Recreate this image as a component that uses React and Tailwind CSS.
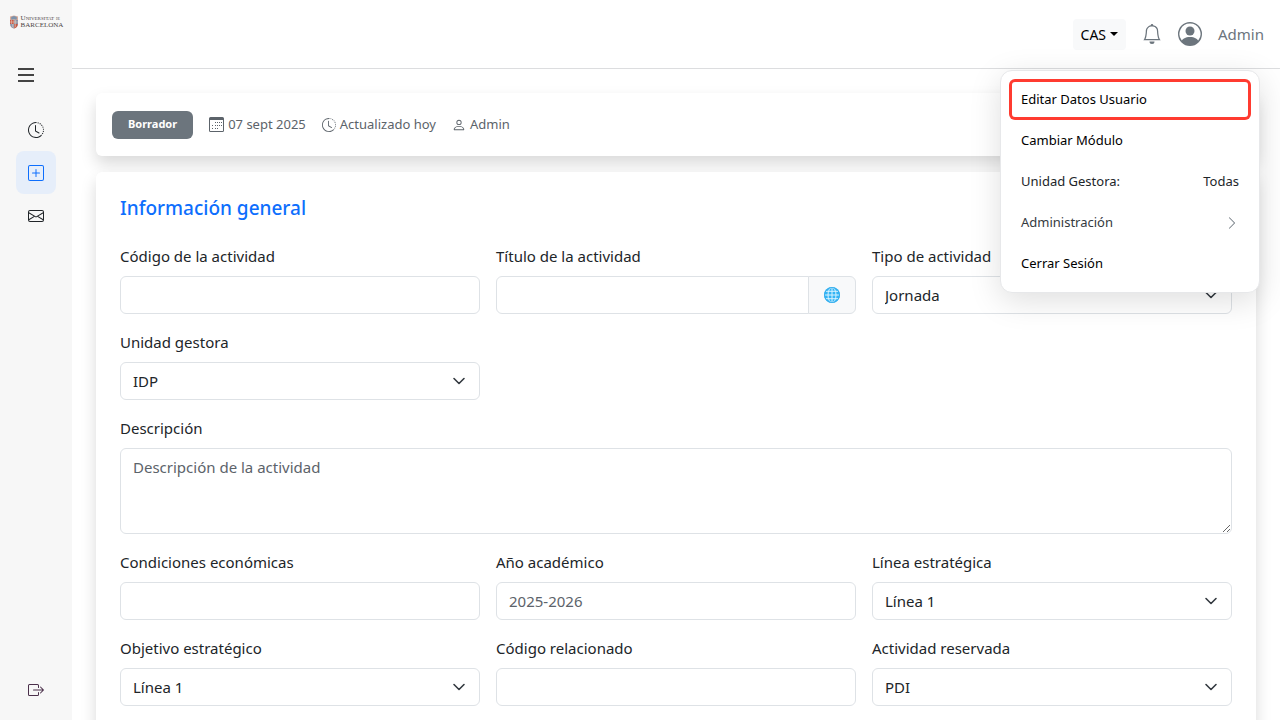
import React from "react";
import {
  BsBell,
  BsBoxArrowRight,
  BsChevronRight,
  BsClockHistory,
  BsEnvelope,
  BsPerson,
  BsPersonCircle,
  BsPlusSquare,
} from "react-icons/bs";

const control =
  "block h-[38px] w-full rounded-md border border-[#dee2e6] bg-white px-3 text-[15px] text-[#212529] placeholder:text-[#5c636a]";

function Field({ id, label, children, className = "" }) {
  return (
    <div className={className}>
      <label htmlFor={id} className="mb-2 block text-[15px] leading-6">
        {label}
      </label>
      {children}
    </div>
  );
}

function TextField({ id, label, placeholder }) {
  return (
    <Field id={id} label={label}>
      <input id={id} type="text" placeholder={placeholder} className={control} />
    </Field>
  );
}

function SelectField({ id, label, options }) {
  return (
    <Field id={id} label={label}>
      <div className="relative">
        <select id={id} className={control + " appearance-none pr-9"}>
          {options.map((option) => (
            <option key={option}>{option}</option>
          ))}
        </select>
        <svg
          viewBox="0 0 16 16"
          className="pointer-events-none absolute top-1/2 right-[13px] h-4 w-4 -translate-y-1/2"
          fill="none"
          stroke="#343a40"
          strokeWidth="1.6"
          strokeLinecap="round"
          strokeLinejoin="round"
          aria-hidden="true"
        >
          <path d="m3 5.500 5 5 5-5" />
        </svg>
      </div>
    </Field>
  );
}

function Logo() {
  return (
    <a href="#inicio" aria-label="Universitat de Barcelona" className="flex items-center justify-center gap-0.5 pt-[15px]">
      <svg viewBox="0 0 10 14" className="h-[14px] w-[10px] shrink-0" aria-hidden="true">
        <path d="M1 1.5 5 .5l4 1V9c0 2.500-1.500 4-4 4.600C2.500 13 1 11.500 1 9Z" fill="#d9aa98" />
        <path d="M2.200 2 5 1l2.800 1v2.500H2.200Z" fill="#7c93ad" />
        <path d="M1 5h4v4H1Z" fill="#c55b4c" />
        <path d="M5 5h4v4H5Z" fill="#8a91a8" />
        <path d="M1.200 9H5v4.500C2.800 12.800 1.500 11.500 1.200 9Z" fill="#8396b4" />
        <path d="M5 9h3.800c-.3 2.500-1.600 3.800-3.800 4.500Z" fill="#bd5548" />
        <path d="M2.500 5v4M6.500 5v7M3.500 9v3M1 7h8M5 4v9" stroke="#ecd3b8" strokeWidth=".5" />
      </svg>
      <span className="flex flex-col font-['Liberation_Serif',serif] text-[#4c4646]">
        <span className="text-[7px] leading-[6px] [font-variant:small-caps]">
          Universitat <span className="text-[4px]">de</span>
        </span>
        <span className="text-[7px] leading-[7px]">BARCELONA</span>
      </span>
    </a>
  );
}

function Sidebar() {
  const item = "flex h-[43px] w-10 items-center justify-center rounded-lg";
  return (
    <aside className="flex w-[72px] shrink-0 flex-col bg-[#f7f7f7] pb-[9px]">
      <Logo />
      <button type="button" aria-label="Menú" className="mt-[34px] ml-[14px] flex h-6 w-6 items-center justify-center text-[#444]">
        <svg viewBox="0 0 16 14" className="h-3.5 w-4" fill="currentColor" aria-hidden="true">
          <path d="M0 0h16v2H0ZM0 6h16v2H0ZM0 12h16v2H0Z" />
        </svg>
      </button>
      <nav className="mt-[21px] flex flex-col items-center">
        <a href="#historial" aria-label="Historial" className={item + " text-[#212529]"}>
          <BsClockHistory size={16} />
        </a>
        <a href="#nueva" aria-label="Nueva actividad" className={item + " bg-[#e6eefa] text-[#0d6efd]"}>
          <BsPlusSquare size={16} />
        </a>
        <a href="#mensajes" aria-label="Mensajes" className={item + " text-[#212529]"}>
          <BsEnvelope size={16} />
        </a>
      </nav>
      <a href="#salir" aria-label="Salir" className={item + " mt-auto self-center text-[#4a2f4a]"}>
        <BsBoxArrowRight size={16} />
      </a>
    </aside>
  );
}

function UserMenu() {
  const item = "flex h-[41px] w-full items-center justify-between rounded-md px-3 text-left";
  return (
    <div className="absolute top-[70px] right-5 z-10 w-[260px] rounded-xl border border-[#e7e8ea] bg-white p-2 text-[13px] text-black shadow-[0_8px_32px_rgba(0,0,0,0.13)]">
      <button type="button" className={item + " bg-white ring-3 ring-[#ff3b30] ring-inset"}>
        Editar Datos Usuario
      </button>
      <button type="button" className={item}>Cambiar Módulo</button>
      <button type="button" className={item + " text-[#212529]"}>
        <span>Unidad Gestora:</span>
        <span>Todas</span>
      </button>
      <button type="button" className={item + " text-[#343a40]"}>
        Administración
        <BsChevronRight size={14} className="text-[#6c757d]" />
      </button>
      <button type="button" className={item}>Cerrar Sesión</button>
    </div>
  );
}

function Topbar() {
  return (
    <header className="flex h-[69px] shrink-0 items-center justify-end border-b border-[#dcdddf] px-4 text-[#6c757d]">
      <button type="button" className="flex h-[31px] items-center gap-1 rounded bg-[#f8f9fa] px-2 text-[14px] text-black">
        CAS
        <svg viewBox="0 0 8 4" className="h-1 w-2" fill="currentColor" aria-hidden="true">
          <path d="M0 0h8L4 4Z" />
        </svg>
      </button>
      <button type="button" aria-label="Notificaciones" className="ml-4">
        <BsBell size={20} />
      </button>
      <button type="button" className="ml-4 flex items-center gap-4 text-[15px]">
        <BsPersonCircle size={24} />
        Admin
      </button>
    </header>
  );
}

function CalendarIcon() {
  return (
    <svg viewBox="0 0 15 15" className="h-[15px] w-[15px]" fill="currentColor" aria-hidden="true">
      <path d="M1.500 0h12A1.500 1.500 0 0 1 15 1.500v12a1.500 1.500 0 0 1-1.500 1.500h-12A1.500 1.500 0 0 1 0 13.500v-12A1.500 1.500 0 0 1 1.500 0ZM1 3v10.500a.5.5 0 0 0 .5.5h12a.5.5 0 0 0 .5-.5V3Z" />
      <path d="M6 5h1v1H6ZM8 5h1v1H8ZM10 5h1v1h-1ZM12 5h1v1h-1ZM3 8h1v1H3ZM6 8h1v1H6ZM8 8h1v1H8ZM10 8h1v1h-1ZM12 8h1v1h-1ZM3 11h1v1H3ZM6 11h1v1H6ZM8 11h1v1H8Z" />
    </svg>
  );
}

function StatusCard() {
  return (
    <section className="flex h-[63px] items-center gap-4 rounded-md bg-white px-4 text-[13px] text-[#5c636a] shadow-[0_8px_16px_rgba(0,0,0,0.15)]">
      <span className="flex h-7 items-center rounded-md bg-[#6c757d] px-4 text-[11px] font-bold text-white">
        Borrador
      </span>
      <span className="flex items-center gap-1">
        <CalendarIcon />
        07 sept 2025
      </span>
      <span className="flex items-center gap-1">
        <BsClockHistory size={14} />
        Actualizado hoy
      </span>
      <span className="flex items-center gap-1">
        <BsPerson size={14} />
        Admin
      </span>
    </section>
  );
}

function ActivityForm() {
  return (
    <form className="rounded-md bg-white p-6 pb-10 shadow-[0_8px_16px_rgba(0,0,0,0.15)]">
      <h2 className="mb-6 text-[19px] leading-6 font-medium text-[#0d6efd]">Información general</h2>
      <div className="grid grid-cols-3 gap-4">
        <TextField id="codigo" label="Código de la actividad" />
        <Field id="titulo" label="Título de la actividad">
          <div className="flex">
            <input id="titulo" type="text" className={control + " min-w-0 rounded-r-none"} />
            <button
              type="button"
              aria-label="Traducir"
              className="-ml-px flex w-12 shrink-0 items-center justify-center rounded-r-md border border-[#dee2e6] bg-[#f8f9fa]"
            >
              <svg viewBox="0 0 16 16" className="h-4 w-4" fill="none" aria-hidden="true">
                <circle cx="8" cy="8" r="8" fill="#35b5f5" />
                <g stroke="#d9f3ff" strokeWidth="1">
                  <path d="M8 .5v15M.5 8h15M2 4.300h12M2 11.700h12" />
                  <ellipse cx="8" cy="8" rx="4" ry="7.500" />
                </g>
                <circle cx="8" cy="8" r="7.500" stroke="#35aeed" />
              </svg>
            </button>
          </div>
        </Field>
        <SelectField id="tipo" label="Tipo de actividad" options={["Jornada"]} />
        <SelectField id="unidad" label="Unidad gestora" options={["IDP"]} />
        <Field id="descripcion" label="Descripción" className="col-span-3">
          <textarea
            id="descripcion"
            placeholder="Descripción de la actividad"
            className="block h-[86px] w-full resize-y rounded-md border border-[#dee2e6] px-3 py-1.5 text-[15px] leading-6 placeholder:text-[#5c636a]"
          />
        </Field>
        <TextField id="condiciones" label="Condiciones económicas" />
        <TextField id="anio" label="Año académico" placeholder="2025-2026" />
        <SelectField id="linea" label="Línea estratégica" options={["Línea 1"]} />
        <SelectField id="objetivo" label="Objetivo estratégico" options={["Línea 1"]} />
        <TextField id="relacionado" label="Código relacionado" />
        <SelectField id="reservada" label="Actividad reservada" options={["PDI"]} />
      </div>
    </form>
  );
}

export default function App() {
  return (
    <div className="relative flex h-screen overflow-hidden bg-white font-['Segoe_UI','Noto_Sans',sans-serif] text-[#212529]">
      <Sidebar />
      <div className="flex min-w-0 flex-1 flex-col">
        <Topbar />
        <main className="flex min-h-0 flex-1 flex-col gap-4 overflow-y-auto p-6 [scrollbar-width:none]">
          <div className="shrink-0">
            <StatusCard />
          </div>
          <div className="shrink-0">
            <ActivityForm />
          </div>
        </main>
      </div>
      <UserMenu />
    </div>
  );
}
